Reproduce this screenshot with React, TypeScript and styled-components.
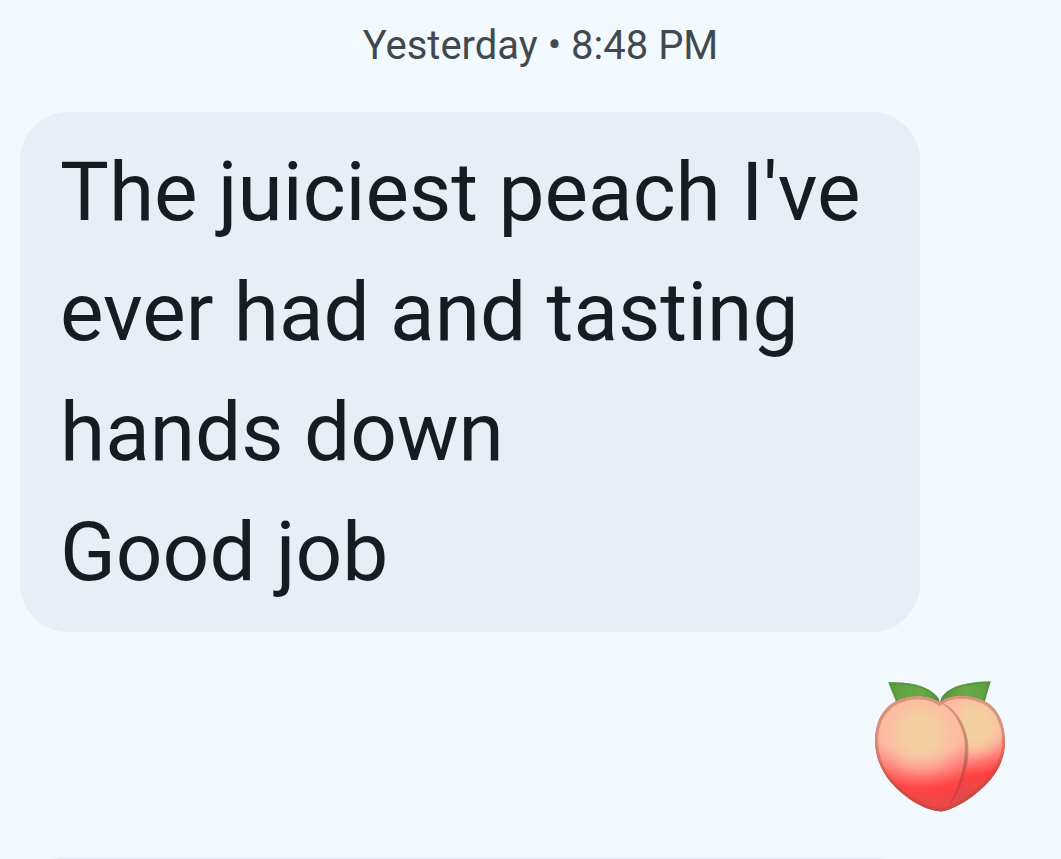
import React from "react";
import styled, { createGlobalStyle } from "styled-components";

const GlobalStyle = createGlobalStyle`
  * { box-sizing: border-box; }
  body {
    margin: 0;
    background: #f2f9ff;
    font-family: Roboto, "Liberation Sans", sans-serif;
  }
`;

const Conversation = styled.main`
  display: flex;
  flex-direction: column;
  height: 100vh;
  padding: 20px 20px 0;
  overflow: hidden;
`;

const Timestamp = styled.time`
  flex: none;
  align-self: center;
  padding-left: 20px;
  margin-bottom: 40px;
  color: #42494d;
  font-size: 40px;
  line-height: 52px;
`;

const Bubble = styled.article`
  flex: none;
  width: 90%;
  max-width: 900px;
  min-height: 120px;
  padding: 20px 40px;
  border-radius: 48px;
  background: ${(p: { $tone?: string }) => p.$tone ?? "#e8eef6"};
  color: #171c22;
  font-size: 82px;
  line-height: 120px;
`;

const Line = styled.p`
  margin: 0;
`;

const Reply = styled.div`
  flex: none;
  display: flex;
  justify-content: flex-end;
  padding: 48px 34px 43px 0;
`;

const PeachIcon = styled.svg`
  display: block;
  width: 134px;
  height: 134px;
`;

const BODY =
  "M240 97C210 75 150 72 108 94C65 117 43 165 46 222C50 288 88 345 148 386C181 409 215 423 246 425C278 420 322 394 352 369C405 326 437 276 437 213C436 153 410 106 367 90C322 70 270 72 240 97Z";
const LEFT_LOBE =
  "M240 97C210 75 150 72 108 94C65 117 43 165 46 222C50 288 88 345 148 386C181 409 215 423 246 425L272 400C307 350 326 293 325 232C323 171 288 112 240 97Z";

function Peach() {
  return (
    <PeachIcon viewBox="40 30 402 402" role="img" aria-label="Peach">
      <defs>
        <linearGradient id="leafLeft" x1="100" y1="45" x2="235" y2="100" gradientUnits="userSpaceOnUse">
          <stop offset="0" stopColor="#5c9e40" />
          <stop offset="0.6" stopColor="#6aaa46" />
          <stop offset="1" stopColor="#55903f" />
        </linearGradient>
        <linearGradient id="leafRight" x1="245" y1="90" x2="390" y2="40" gradientUnits="userSpaceOnUse">
          <stop offset="0" stopColor="#55903f" />
          <stop offset="0.5" stopColor="#6aaa46" />
          <stop offset="1" stopColor="#5c9e40" />
        </linearGradient>
        <radialGradient id="lobeLeft" cx="185" cy="40" r="385" gradientUnits="userSpaceOnUse">
          <stop offset="0" stopColor="#ffb9a1" />
          <stop offset="0.55" stopColor="#ffb9a1" />
          <stop offset="0.7" stopColor="#ff827a" />
          <stop offset="0.82" stopColor="#ff4444" />
          <stop offset="1" stopColor="#e54848" />
        </radialGradient>
        <radialGradient id="lobeRight" cx="315" cy="70" r="340" gradientUnits="userSpaceOnUse">
          <stop offset="0" stopColor="#ffbea2" />
          <stop offset="0.46" stopColor="#ffb9a1" />
          <stop offset="0.6" stopColor="#ff827a" />
          <stop offset="0.73" stopColor="#ff4141" />
          <stop offset="0.88" stopColor="#e54848" />
        </radialGradient>
        <radialGradient id="glowLeft" cx="183" cy="190" r="130" gradientUnits="userSpaceOnUse">
          <stop offset="0" stopColor="#f3d0a0" />
          <stop offset="0.4" stopColor="#f3d0a0" stopOpacity="0.9" />
          <stop offset="1" stopColor="#f8c5a0" stopOpacity="0" />
        </radialGradient>
        <radialGradient id="glowRight" cx="345" cy="168" r="105" gradientUnits="userSpaceOnUse">
          <stop offset="0" stopColor="#f3d0a0" />
          <stop offset="0.45" stopColor="#f3d0a0" stopOpacity="0.9" />
          <stop offset="1" stopColor="#f8c5a0" stopOpacity="0" />
        </radialGradient>
        <linearGradient id="crease" x1="0" y1="97" x2="0" y2="400" gradientUnits="userSpaceOnUse">
          <stop offset="0" stopColor="#d58f7c" />
          <stop offset="0.45" stopColor="#bd8b70" />
          <stop offset="0.75" stopColor="#d3403f" />
          <stop offset="1" stopColor="#c93c3d" />
        </linearGradient>
        <clipPath id="peachBody">
          <path d={BODY} />
        </clipPath>
      </defs>
      <path d="M86 37C145 36 207 43 238 88L240 100L112 100Z" fill="url(#leafLeft)" />
      <path d="M112 98L90 40C145 39 205 46 236 87" fill="none" stroke="#3f7d32" strokeOpacity="0.35" strokeWidth="6" />
      <path d="M393 34C330 36 273 43 245 84L240 100L374 100Z" fill="url(#leafRight)" />
      <path d="M246 84C275 47 330 39 389 38L371 94" fill="none" stroke="#3f7d32" strokeOpacity="0.35" strokeWidth="6" />
      <g clipPath="url(#peachBody)">
        <path d={BODY} fill="url(#lobeRight)" />
        <path d={BODY} fill="url(#glowRight)" />
        <path d={LEFT_LOBE} fill="url(#lobeLeft)" />
        <path d={LEFT_LOBE} fill="url(#glowLeft)" />
        <path d={BODY} fill="none" stroke="#a0503f" strokeOpacity="0.38" strokeWidth="19" />
      </g>
      <path
        d="M240 97C288 112 323 171 325 232C326 293 307 350 272 400C299 352 315 293 317 235C317 175 286 120 240 97Z"
        fill="url(#crease)"
        stroke="url(#crease)"
        strokeWidth="2"
      />
    </PeachIcon>
  );
}

export default function App() {
  return (
    <>
      <GlobalStyle />
      <Conversation>
        <Timestamp>Yesterday • 8:48 PM</Timestamp>
        <Bubble>
          <Line>The juiciest peach I've ever had and tasting hands down</Line>
          <Line>Good job</Line>
        </Bubble>
        <Reply>
          <Peach />
        </Reply>
        <Bubble $tone="#e8ecf8" />
      </Conversation>
    </>
  );
}
